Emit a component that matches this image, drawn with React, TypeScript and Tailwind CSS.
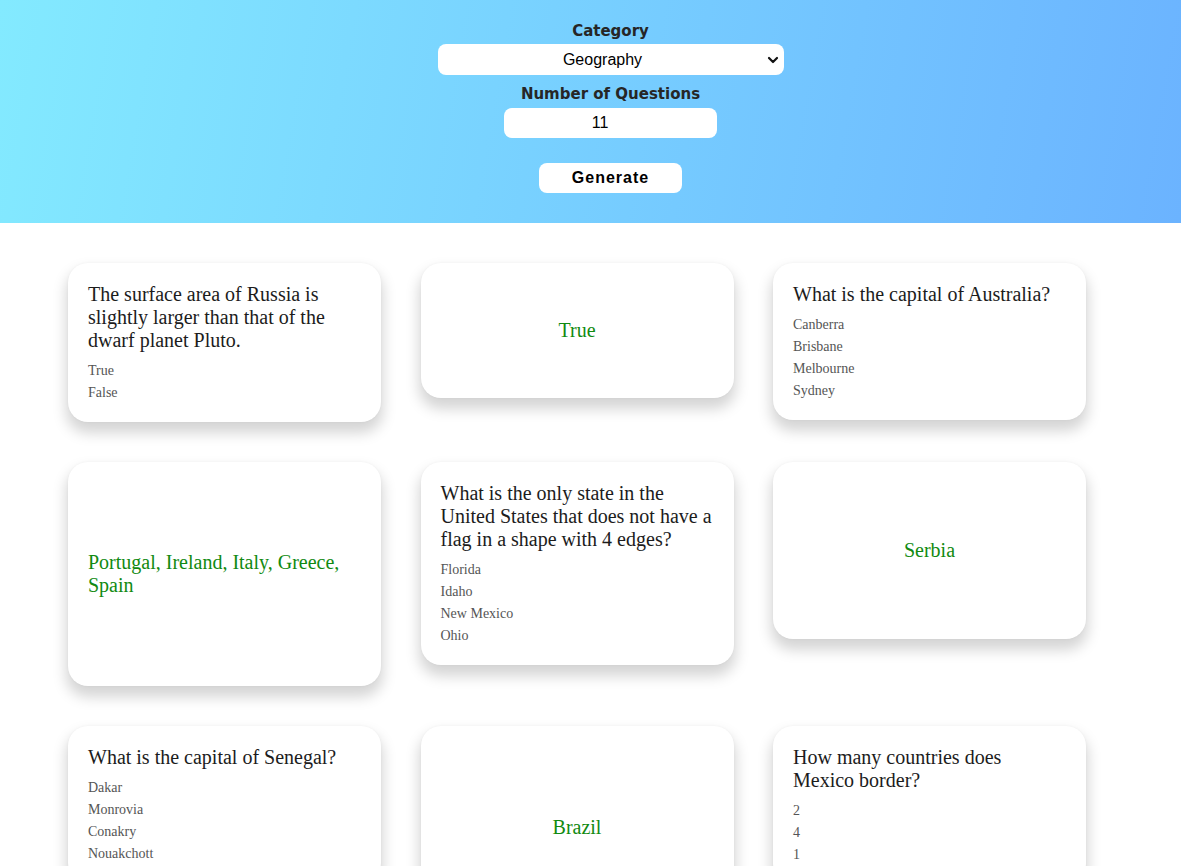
import { useState } from "react"

type TCard = {
  question: string
  options: string[]
  answer: string
  flipped?: boolean
  height?: string
}

const cards: TCard[] = [
  {
    question:
      "The surface area of Russia is slightly larger than that of the dwarf planet Pluto.",
    options: ["True", "False"],
    answer: "True",
  },
  {
    question: "Which country is the only one in the world to not use a rectangle flag?",
    options: ["Nepal", "Bhutan", "Switzerland", "Vatican City"],
    answer: "True",
    flipped: true,
    height: "h-[135px]",
  },
  {
    question: "What is the capital of Australia?",
    options: ["Canberra", "Brisbane", "Melbourne", "Sydney"],
    answer: "Canberra",
  },
  {
    question: "Which countries make up the PIIGS group?",
    options: [],
    answer: "Portugal, Ireland, Italy, Greece, Spain",
    flipped: true,
    height: "h-[224px]",
  },
  {
    question:
      "What is the only state in the United States that does not have a flag in a shape with 4 edges?",
    options: ["Florida", "Idaho", "New Mexico", "Ohio"],
    answer: "Ohio",
  },
  {
    question: "Which country was formerly part of Yugoslavia?",
    options: [],
    answer: "Serbia",
    flipped: true,
    height: "h-[177px]",
  },
  {
    question: "What is the capital of Senegal?",
    options: ["Dakar", "Monrovia", "Conakry", "Nouakchott"],
    answer: "Dakar",
  },
  {
    question: "Which is the largest country in South America?",
    options: [],
    answer: "Brazil",
    flipped: true,
    height: "h-[202px]",
  },
  {
    question: "How many countries does Mexico border?",
    options: ["2", "4", "1"],
    answer: "2",
  },
]

const Flashcard = ({ card }: { card: TCard }) => {
  const [flipped, setFlipped] = useState(!!card.flipped)

  return (
    <div
      onClick={() => setFlipped(!flipped)}
      className={`bg-white rounded-[20px] p-5 cursor-pointer shadow-[0_9px_14px_2px_rgba(0,0,0,0.17),0_0_3px_rgba(0,0,0,0.04)] ${
        flipped ? card.height ?? "" : ""
      }`}
    >
      {flipped ? (
        <div className="flex h-full items-center justify-center">
          <div className="text-[20px] leading-[23px] text-[#118a11]">
            {card.answer}
          </div>
        </div>
      ) : (
        <div>
          <div className="text-[20px] leading-[23px] text-[#1c1c1c]">
            {card.question}
          </div>
          <div className="mt-[10px]">
            {card.options.map((option) => (
              <div
                key={option}
                className="mt-1 text-[14px] leading-[18px] text-[#555]"
              >
                {option}
              </div>
            ))}
          </div>
        </div>
      )}
    </div>
  )
}

export default function App() {
  const [category, setCategory] = useState("geography")
  const [amount, setAmount] = useState("11")

  return (
    <div className="min-h-screen bg-white font-['Liberation_Serif',serif]">
      <header className="h-[223px] bg-[linear-gradient(100deg,#83eaff,#6bb3ff)] pl-10 pt-[22px] flex flex-col items-center">
        <label
          htmlFor="category"
          className="font-['DejaVu_Sans',sans-serif] font-bold text-[15px] leading-[18px] text-[#262626]"
        >
          Category
        </label>
        <div className="relative mt-1">
          <select
            id="category"
            value={category}
            onChange={(e) => setCategory(e.target.value)}
            className="appearance-none w-[346px] h-[31px] bg-white rounded-lg pl-2 pr-6 font-['Liberation_Sans',sans-serif] text-[16px] text-black text-center [text-align-last:center] outline-none"
          >
            <option value="general">General Knowledge</option>
            <option value="geography">Geography</option>
            <option value="history">History</option>
          </select>
          <svg
            className="pointer-events-none absolute right-[5px] top-[10px]"
            width="12"
            height="12"
            viewBox="0 0 12 12"
            fill="none"
            stroke="#111"
            strokeWidth="2.2"
            strokeLinecap="round"
            strokeLinejoin="round"
          >
            <path d="M2 4l4 4 4-4" />
          </svg>
        </div>
        <label
          htmlFor="amount"
          className="mt-[10px] font-['DejaVu_Sans',sans-serif] font-bold text-[15px] leading-[18px] text-[#262626]"
        >
          Number of Questions
        </label>
        <input
          id="amount"
          type="number"
          value={amount}
          onChange={(e) => setAmount(e.target.value)}
          className="mt-[5px] w-[213px] h-[30px] bg-white rounded-lg pr-[6px] text-center font-['Liberation_Sans',sans-serif] text-[16px] text-black outline-none [appearance:textfield]"
        />
        <button className="mt-[25px] w-[143px] h-[30px] bg-white rounded-lg font-['Liberation_Sans',sans-serif] font-bold text-[16px] tracking-[1px] text-black">
          Generate
        </button>
      </header>

      <main className="pl-[68px] pt-10 pb-10">
        <div className="grid grid-cols-[repeat(3,313px)] gap-y-10 gap-x-[39.5px] items-start">
          {cards.map((card, i) => (
            <Flashcard key={i} card={card} />
          ))}
        </div>
      </main>
    </div>
  )
}
